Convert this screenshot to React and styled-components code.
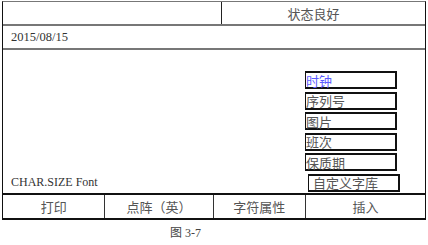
import React from 'react';
import styled, { createGlobalStyle } from 'styled-components';

const GlobalStyle = createGlobalStyle`
  body {
    margin: 0;
    background: #fff;
    font-family: "Liberation Serif", "Noto Sans CJK SC", serif;
  }
`;

const Page = styled.div`
  width: 428px;
  height: 245px;
  padding-top: 1px;
  box-sizing: border-box;
`;

const Frame = styled.div`
  margin-left: 2px;
  width: 424px;
  box-sizing: border-box;
  border-left: 1px solid #111;
  border-right: 1px solid #111;
  border-top: 1px solid #777;
  border-bottom: 2px solid #111;
`;

const Header = styled.div`
  display: flex;
  height: 22px;
  border-bottom: 2px solid #777;
`;

const HeaderCell = styled.div`
  width: ${p => p.w}px;
  flex: none;
  box-sizing: border-box;
  display: flex;
  align-items: center;
  justify-content: center;
  padding-right: ${p => p.pad || 0}px;
  color: #555;
  font-size: 13px;
  font-family: "Noto Sans CJK SC", sans-serif;
  & + & {
    border-left: 1px solid #222;
  }
`;

const DateRow = styled.div`
  height: 22px;
  display: flex;
  align-items: center;
  padding-left: 8px;
  font-size: 12.5px;
  color: #333;
  border-bottom: 2px solid #777;
`;

const Body = styled.div`
  height: 143px;
  display: flex;
  justify-content: space-between;
  padding: 0 27px 0 8px;
`;

const SizeLabel = styled.div`
  align-self: flex-end;
  padding-bottom: 3px;
  font-size: 12px;
  color: #333;
`;

const Menu = styled.div`
  display: flex;
  flex-direction: column;
  gap: 2.6px;
  padding-top: 21px;
`;

const MenuItem = styled.div`
  width: 92px;
  height: 18px;
  box-sizing: border-box;
  border: 2px solid #111;
  border-left-width: 1.5px;
  margin-left: ${p => (p.shift ? 3 : 0)}px;
  margin-right: ${p => (p.shift ? -2 : 0)}px;
  padding-left: ${p => (p.shift ? 4 : 0)}px;
  display: flex;
  align-items: center;
  font-family: "Noto Sans CJK SC", sans-serif;
  font-size: 13px;
  line-height: 1;
  color: ${p => (p.active ? '#5b5bff' : '#555')};
`;

const Buttons = styled.div`
  display: flex;
  height: 23px;
  border-top: 2px solid #111;
`;

const Button = styled.div`
  width: ${p => p.w}px;
  display: flex;
  align-items: center;
  justify-content: center;
  font-family: "Noto Sans CJK SC", sans-serif;
  font-size: 13px;
  color: #555;
  & + & {
    border-left: 1.5px solid #333;
  }
`;

const Caption = styled.div`
  margin-top: 3px;
  padding-left: 170px;
  font-size: 12px;
  color: #444;
  font-family: "Liberation Serif", "Noto Sans CJK SC", serif;
`;

const items = ['时钟', '序列号', '图片', '班次', '保质期'];
const buttons = [
  { label: '打印', w: 102 },
  { label: '点阵（英）', w: 108 },
  { label: '字符属性', w: 92 },
  { label: '插入', w: 120 },
];

export default function App() {
  return (
    <Page>
      <GlobalStyle />
      <Frame>
        <Header>
          <HeaderCell w={218} />
          <HeaderCell w={204} pad={20}>状态良好</HeaderCell>
        </Header>
        <DateRow>2015/08/15</DateRow>
        <Body>
          <SizeLabel>CHAR.SIZE Font</SizeLabel>
          <Menu>
            {items.map((t, i) => (
              <MenuItem key={t} active={i === 0}>{t}</MenuItem>
            ))}
            <MenuItem shift>自定义字库</MenuItem>
          </Menu>
        </Body>
        <Buttons>
          {buttons.map(b => (
            <Button key={b.label} w={b.w}>{b.label}</Button>
          ))}
        </Buttons>
      </Frame>
      <Caption>图 3-7</Caption>
    </Page>
  );
}
